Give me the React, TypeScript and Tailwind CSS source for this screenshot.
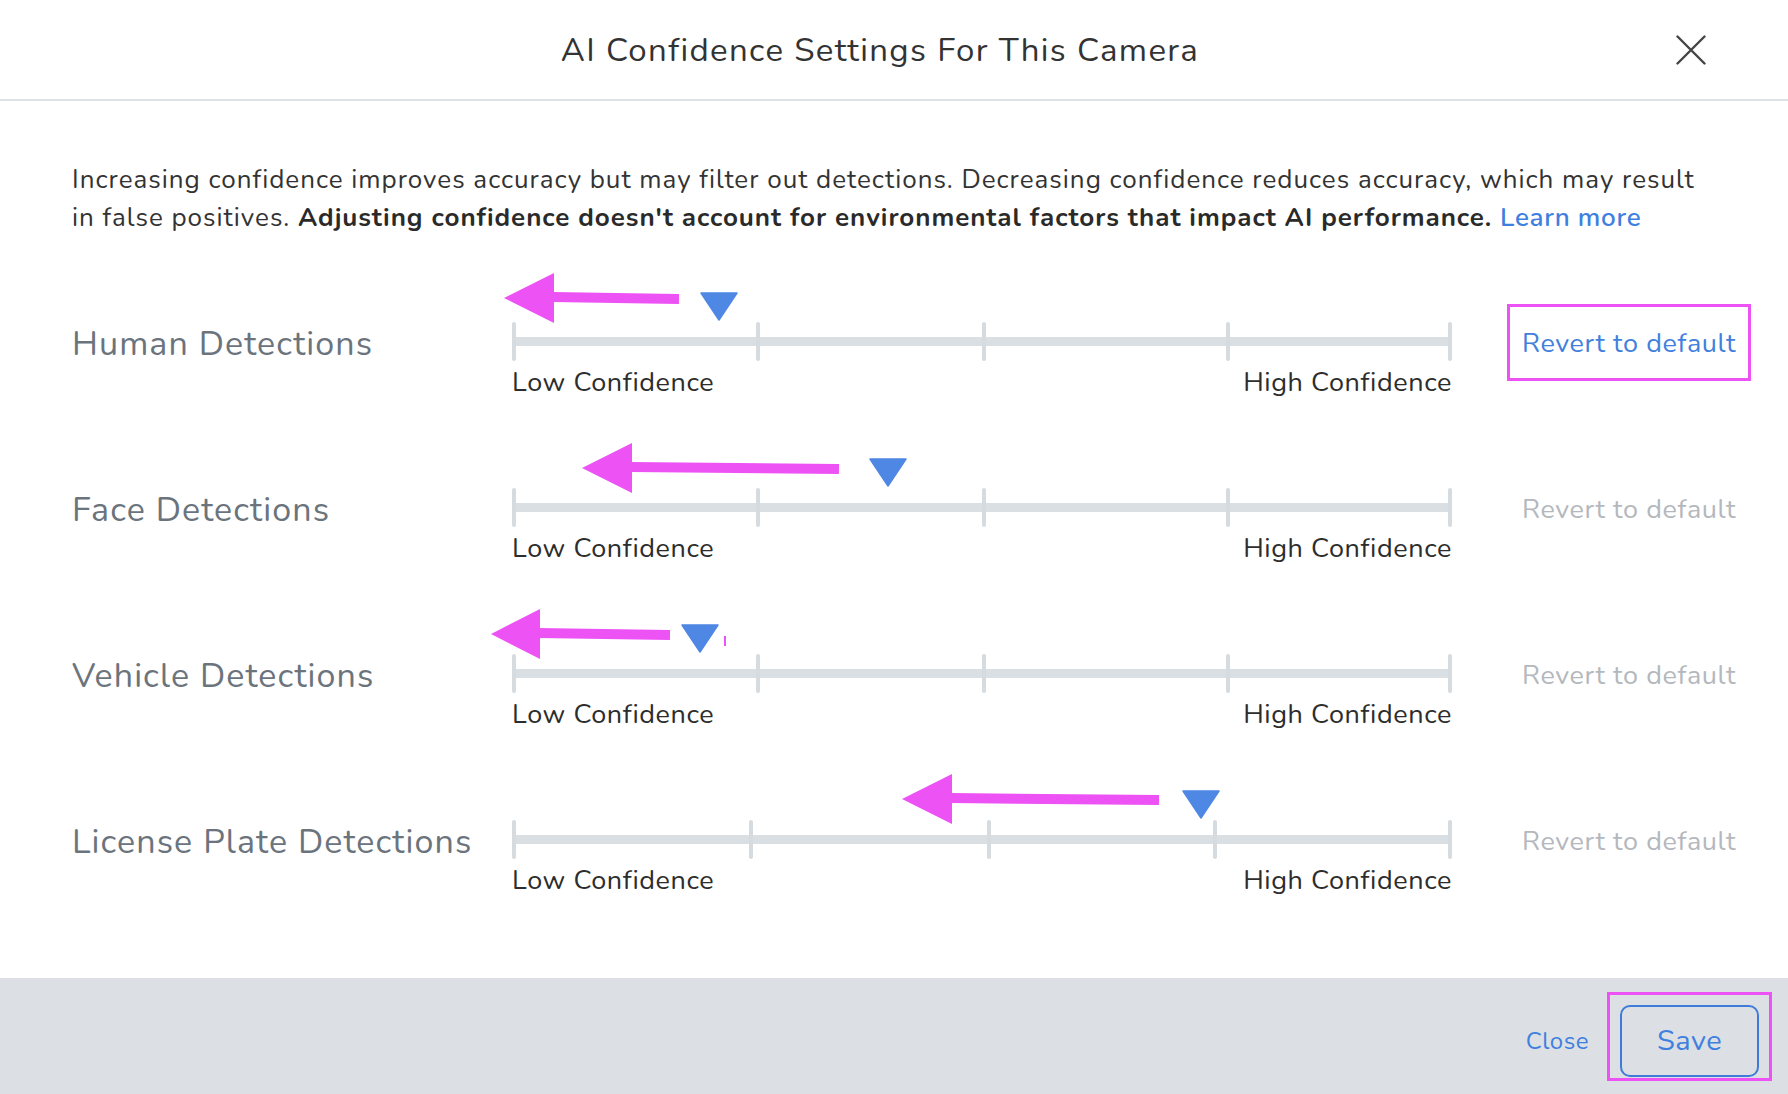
type Arrow = { tip: number; back: number; end: number; y: number; mark?: number };

type Row = {
  label: string;
  thumb: number; // thumb centre, px from track start
  ticks: number[]; // px from track start
  arrow: Arrow;
  active?: boolean;
};

const ROWS: Row[] = [
  {
    label: 'Human Detections',
    thumb: 207,
    ticks: [0, 244, 470, 714, 940],
    arrow: { tip: -8, back: 42, end: 167, y: -44 },
    active: true,
  },
  {
    label: 'Face Detections',
    thumb: 376,
    ticks: [0, 244, 470, 714, 940],
    arrow: { tip: 70, back: 120, end: 327, y: -40 },
  },
  {
    label: 'Vehicle Detections',
    thumb: 188,
    ticks: [0, 244, 470, 714, 940],
    arrow: { tip: -21, back: 28, end: 158, y: -40, mark: 212 },
  },
  {
    label: 'License Plate Detections',
    thumb: 689,
    ticks: [0, 237, 475, 701, 940],
    arrow: { tip: 390, back: 440, end: 647, y: -41 },
  },
];

const FONT = "font-['Nunito','Lato','Noto_Sans',sans-serif]";

function Annotation({ arrow }: { arrow: Arrow }) {
  const { tip, back, end, y, mark } = arrow;
  return (
    <svg className="pointer-events-none absolute left-0 top-1/2 h-px w-[940px] overflow-visible" aria-hidden="true">
      <polygon points={`${tip},${y} ${back},${y - 25} ${back},${y + 25}`} fill="#ed52f4" />
      <line x1={back - 2} y1={y - 1} x2={end} y2={y + 1} stroke="#ed52f4" strokeWidth="10" />
      {mark !== undefined && <rect x={mark} y={y + 2} width="2" height="10" fill="#ed52f4" />}
    </svg>
  );
}

function ConfidenceRow({ row }: { row: Row }) {
  return (
    <div className="grid h-[166px] grid-cols-[440px_940px_1fr]">
      <div className="self-center whitespace-nowrap pt-[6px] text-[34px] leading-[40px] tracking-[1.1px] text-[#6b747d]">
        {row.label}
      </div>

      <div className="flex flex-col pt-[64px]">
        <div className="relative flex h-[39px] items-center">
          <div className="h-[9px] w-full bg-[#dadfe3]" />
          {row.ticks.map((t) => (
            <div
              key={t}
              className="absolute top-0 h-[39px] w-[4px] rounded-full bg-[#d6dbe0]"
              style={{ left: Math.min(t, 936) }}
            />
          ))}
          <svg
            className="absolute top-[-30px] h-[29px] w-[38px]"
            style={{ left: row.thumb - 19 }}
            viewBox="0 0 38 29"
            aria-hidden="true"
          >
            <polygon points="1,1 37,1 19,28" fill="#4f87e4" stroke="#4f87e4" strokeWidth="1.5" strokeLinejoin="round" />
          </svg>
          <Annotation arrow={row.arrow} />
        </div>
        <div className="mt-[3px] flex justify-between text-[27px] leading-[38px] tracking-[0.6px] text-[#2d2d2d]">
          <span>Low Confidence</span>
          <span>High Confidence</span>
        </div>
      </div>

      <div className="flex items-center justify-end pr-[37px] pt-[2px]">
        <button
          type="button"
          className={`h-[77px] whitespace-nowrap border-[3px] px-[12px] pt-[4px] text-[27px] tracking-[0.6px] ${
            row.active ? 'border-[#ed52f4] text-[#4280dd]' : 'border-transparent text-[#b4b8bd]'
          }`}
        >
          Revert to default
        </button>
      </div>
    </div>
  );
}

export default function App() {
  return (
    <div className={`flex h-[1094px] w-full flex-col bg-white ${FONT}`}>
      <header className="flex h-[101px] shrink-0 items-center border-b-2 border-[#dde1e5] pl-[85px] pr-[81px]">
        <h1 className="flex-1 pt-[2px] text-center text-[33px] tracking-[1.35px] text-[#333]">
          AI Confidence Settings For This Camera
        </h1>
        <button type="button" aria-label="Close" className="flex h-[32px] w-[32px] items-center justify-center">
          <svg viewBox="0 0 30 30" className="h-[30px] w-[30px]" aria-hidden="true">
            <path d="M1.5 1.5 L28.5 28.5 M28.5 1.5 L1.5 28.5" stroke="#444" strokeWidth="2.4" strokeLinecap="round" />
          </svg>
        </button>
      </header>

      <main className="flex-1 pl-[72px] pt-[60px]">
        <p className="pr-[72px] text-[26px] leading-[38px] tracking-[1px] text-[#333]">
          Increasing confidence improves accuracy but may filter out detections. Decreasing confidence reduces accuracy, which may result
          <br />
          in false positives.{' '}
          <strong className="font-bold tracking-[0.95px] text-[#2a2a2a]">
            Adjusting confidence doesn't account for environmental factors that impact AI performance.
          </strong>{' '}
          <a className="font-semibold tracking-[0.7px] text-[#3f7fdf]">Learn more</a>
        </p>

        <div className="mt-[21px]">
          {ROWS.map((row) => (
            <ConfidenceRow key={row.label} row={row} />
          ))}
        </div>
      </main>

      <footer className="flex h-[116px] shrink-0 items-center justify-end gap-[18px] bg-[#dce0e4] pr-[16px]">
        <button type="button" className="pt-[10px] text-[24px] tracking-[0.5px] text-[#3f7fdf]">
          Close
        </button>
        <div className="border-[3px] border-[#ed52f4] px-[10px] pb-[1px] pt-[10px]">
          <button
            type="button"
            className="h-[72px] w-[139px] rounded-[10px] border-2 border-[#3f7bd8] text-[29px] tracking-[0.5px] text-[#3f7fdf]"
          >
            Save
          </button>
        </div>
      </footer>
    </div>
  );
}
